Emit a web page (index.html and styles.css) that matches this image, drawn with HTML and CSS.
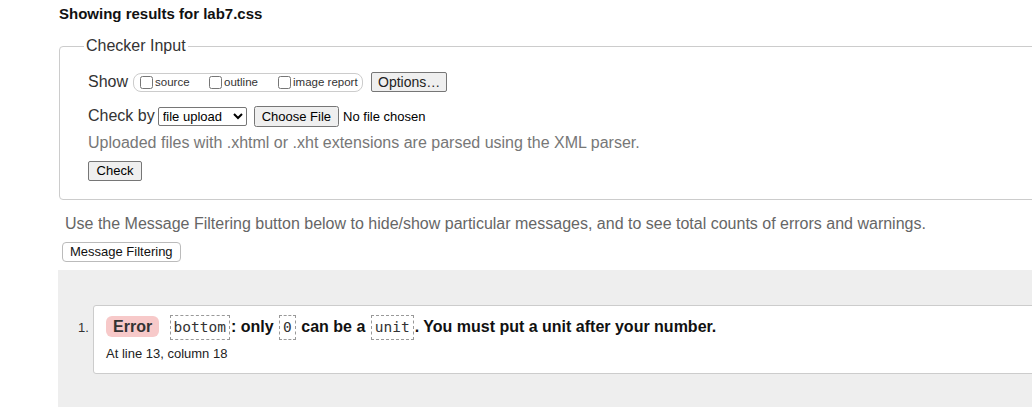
FILE: index.html
```html
<!DOCTYPE html>
<html>
<head>
<meta charset="utf-8">
<link rel="stylesheet" href="styles.css">
</head>
<body>
<div class="page">
  <h2 class="title">Showing results for lab7.css</h2>
  <fieldset class="checker">
    <legend class="legend">Checker Input</legend>
    <div class="inner">
      <div class="row show-row">
        <span class="label">Show</span>
        <span class="opts">
          <label class="opt"><input type="checkbox" class="cb">source</label>
          <label class="opt"><input type="checkbox" class="cb">outline</label>
          <label class="opt last"><input type="checkbox" class="cb">image report</label>
        </span>
        <button class="btn options">Options…</button>
      </div>
      <div class="row by-row">
        <span class="label">Check by</span>
        <select class="sel"><option>file upload</option></select>
        <input type="file" class="file">
      </div>
      <p class="note">Uploaded files with .xhtml or .xht extensions are parsed using the XML parser.</p>
      <button class="btn check">Check</button>
    </div>
  </fieldset>
  <p class="info">Use the Message Filtering button below to hide/show particular messages, and to see total counts of errors and warnings.</p>
  <button class="btn filter">Message Filtering</button>
  <div class="results">
    <ol class="list">
      <li class="item">
        <span class="num">1.</span>
        <div class="card">
          <p class="msg"><span class="badge">Error</span> <code class="code">bottom</code>: only <code class="code">0</code> can be a <code class="code">unit</code>. You must put a unit after your number.</p>
          <p class="loc">At line 13, column 18</p>
        </div>
      </li>
    </ol>
  </div>
</div>
</body>
</html>
```
FILE: styles.css
```css
html, body {
  margin: 0;
  padding: 0;
  overflow: hidden;
  background: #fff;
}
body {
  font-family: "Liberation Sans", Arial, sans-serif;
  color: #000;
  width: 1032px;
  height: 407px;
}
.page {
  padding-left: 59px;
  width: 1200px;
}
.title {
  font-size: 15px;
  font-weight: bold;
  margin: 0;
  padding-top: 5px;
  line-height: 18px;
  color: #111;
}
.checker {
  margin: 14px 0 0 0;
  padding: 0 0 18px 0;
  border: 1px solid #ccc;
  border-radius: 4px;
  width: 1100px;
  box-sizing: border-box;
}
.legend {
  margin-left: 24px;
  padding: 0 2px;
  font-size: 16px;
  color: #333;
  line-height: 18px;
}
.inner {
  padding-left: 28px;
}
.row {
  display: flex;
  align-items: center;
}
.show-row {
  margin-top: 16px;
  height: 22px;
}
.label {
  font-size: 16px;
  color: #333;
}
.opts {
  display: inline-flex;
  align-items: center;
  border: 1px solid #ccc;
  border-radius: 8px;
  height: 17px;
  margin-left: 5px;
  padding: 0 4px 0 3px;
  width: 221px;
}
.opt {
  display: inline-flex;
  align-items: center;
  font-size: 11.5px;
  color: #333;
  width: 69px;
}
.opt.last {
  width: auto;
}
.cb {
  width: 13px;
  height: 13px;
  margin: 0 2px 0 3px;
}
.btn {
  font-family: "Liberation Sans", Arial, sans-serif;
  font-size: 13px;
  color: #000;
  background: #efefef;
  border: 1px solid #767676;
  border-radius: 2px;
  padding: 0 6px;
  height: 20px;
  line-height: 18px;
}
.options {
  margin-left: 8px;
  width: 76px;
  font-size: 14px;
  color: #222;
}
.by-row {
  margin-top: 13px;
  height: 20px;
}
.sel {
  font-family: "Liberation Sans", Arial, sans-serif;
  font-size: 13px;
  height: 19px;
  margin-left: 3px;
  width: 89px;
  padding: 0;
  border: 1px solid #767676;
  border-radius: 2px;
  color: #000;
  background: #fff;
}
.file {
  font-family: "Liberation Sans", Arial, sans-serif;
  font-size: 13px;
  margin-left: 7px;
  color: #000;
}
.note {
  margin: 7px 0 0 0;
  font-size: 16px;
  color: #777;
  line-height: 19px;
}
.check {
  margin-top: 9px;
  width: 54px;
  padding: 0;
}
.info {
  margin: 14px 0 0 6px;
  font-size: 16px;
  color: #666;
  line-height: 19px;
}
.filter {
  margin: 9px 0 0 3px;
  border: 1px solid #bbb;
  border-radius: 4px;
  background: #fff;
  height: 20px;
  padding: 0 7px;
  color: #111;
}
.results {
  margin-top: 8px;
  margin-left: -1px;
  background: #eee;
  padding: 35px 0 40px 0;
}
.list {
  list-style: none;
  margin: 0;
  padding: 0;
}
.item {
  display: flex;
  align-items: flex-start;
}
.num {
  width: 35px;
  box-sizing: border-box;
  padding-left: 20px;
  font-size: 13px;
  color: #333;
  padding-top: 15px;
}
.card {
  flex: 1;
  background: #fff;
  border: 1px solid #ccc;
  border-radius: 3px 0 0 3px;
  padding: 8px 12px 12px 12px;
}
.msg {
  margin: 0;
  font-size: 16px;
  font-weight: bold;
  color: #111;
  line-height: 25px;
}
.badge {
  display: inline-block;
  background: #f7c9c9;
  border-radius: 6px;
  padding: 0 7px;
  line-height: 21px;
  color: #333;
  margin-right: 5px;
}
.code {
  display: inline-block;
  font-family: "DejaVu Sans Mono", monospace;
  font-weight: normal;
  font-size: 14.5px;
  color: #333;
  border: 1px dashed #999;
  padding: 0 3px;
  line-height: 23px;
  vertical-align: middle;
  margin: 0 1px;
}
.loc {
  margin: 6px 0 0 0;
  font-size: 13px;
  color: #222;
  line-height: 15px;
}
```
